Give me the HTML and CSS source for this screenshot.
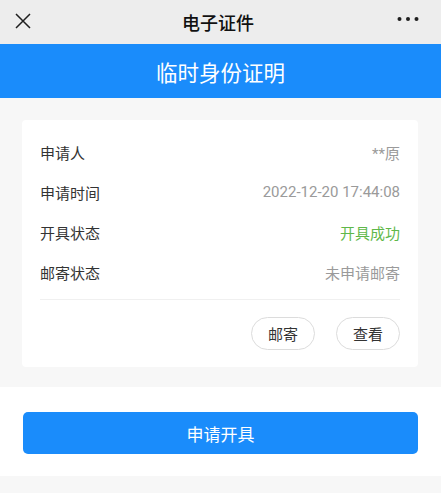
FILE: index.html
```html
<!DOCTYPE html>
<html lang="zh-CN">
<head>
<meta charset="utf-8">
<title>电子证件</title>
<link rel="stylesheet" href="styles.css">
</head>
<body>
<header class="topbar">
  <svg class="icon-close" width="16" height="16" viewBox="0 0 16 16"><path d="M1 1L15 15M15 1L1 15" stroke="#1f1f1f" stroke-width="1.5" fill="none"/></svg>
  <div class="topbar-title">电子证件</div>
  <svg class="icon-more" width="22" height="6" viewBox="0 0 22 6"><circle cx="2.5" cy="3" r="2" fill="#1f1f1f"/><circle cx="11" cy="3" r="2" fill="#1f1f1f"/><circle cx="19.5" cy="3" r="2" fill="#1f1f1f"/></svg>
</header>
<div class="banner">临时身份证明</div>
<section class="section">
  <div class="card">
    <div class="row"><span class="label">申请人</span><span class="value">**原</span></div>
    <div class="row"><span class="label">申请时间</span><span class="value">2022-12-20 17:44:08</span></div>
    <div class="row"><span class="label">开具状态</span><span class="value success">开具成功</span></div>
    <div class="row"><span class="label">邮寄状态</span><span class="value">未申请邮寄</span></div>
    <div class="divider"></div>
    <div class="actions">
      <button class="pill">邮寄</button>
      <button class="pill">查看</button>
    </div>
  </div>
</section>
<div class="apply-area">
  <button class="apply-btn">申请开具</button>
</div>
<div class="footer-gap"></div>
</body>
</html>
```
FILE: styles.css
```css
html, body {
  margin: 0;
  padding: 0;
  background: #f7f7f7;
  font-family: Roboto, "Noto Sans CJK SC", "Noto Sans", sans-serif;
}
.topbar {
  height: 44px;
  background: #ededed;
  display: flex;
  align-items: center;
  justify-content: space-between;
  padding: 0 22px 0 15px;
  box-sizing: border-box;
}
.icon-close { display: block; margin-top: -2px; }
.icon-more { display: block; margin-top: -6px; }
.topbar-title {
  font-size: 18px;
  font-weight: 500;
  color: #111;
  margin-left: 8px;
}
.banner {
  height: 54px;
  background: #1a8cfb;
  color: #fff;
  font-size: 21.5px;
  display: flex;
  align-items: center;
  justify-content: center;
}
.section {
  background: #f7f7f7;
  padding: 22px 23px 20px 22px;
}
.card {
  background: #fff;
  border-radius: 4px;
  padding: 12px 18px 17px 18px;
}
.row {
  height: 40px;
  display: flex;
  align-items: center;
  justify-content: space-between;
  font-size: 15px;
}
.label { color: #333; }
.value { color: #9a9a9a; }
.value.success { color: #5fb84a; }
.divider {
  height: 1px;
  background: #f0f0f0;
  margin-top: 7px;
}
.actions {
  margin-top: 17px;
  display: flex;
  justify-content: flex-end;
  gap: 21px;
}
.pill {
  width: 64px;
  height: 33px;
  border: 1px solid #dcdcdc;
  border-radius: 17px;
  background: #fff;
  color: #333;
  font-family: inherit;
  font-size: 15px;
  padding: 0;
}
.apply-area {
  background: #fff;
  padding: 25px 23px 22px 23px;
}
.apply-btn {
  display: block;
  width: 100%;
  height: 42px;
  border: none;
  border-radius: 5px;
  background: #1a8cfb;
  color: #fff;
  font-family: inherit;
  font-size: 17px;
  padding: 0;
}
.footer-gap {
  height: 17px;
  background: #f7f7f7;
}
```
